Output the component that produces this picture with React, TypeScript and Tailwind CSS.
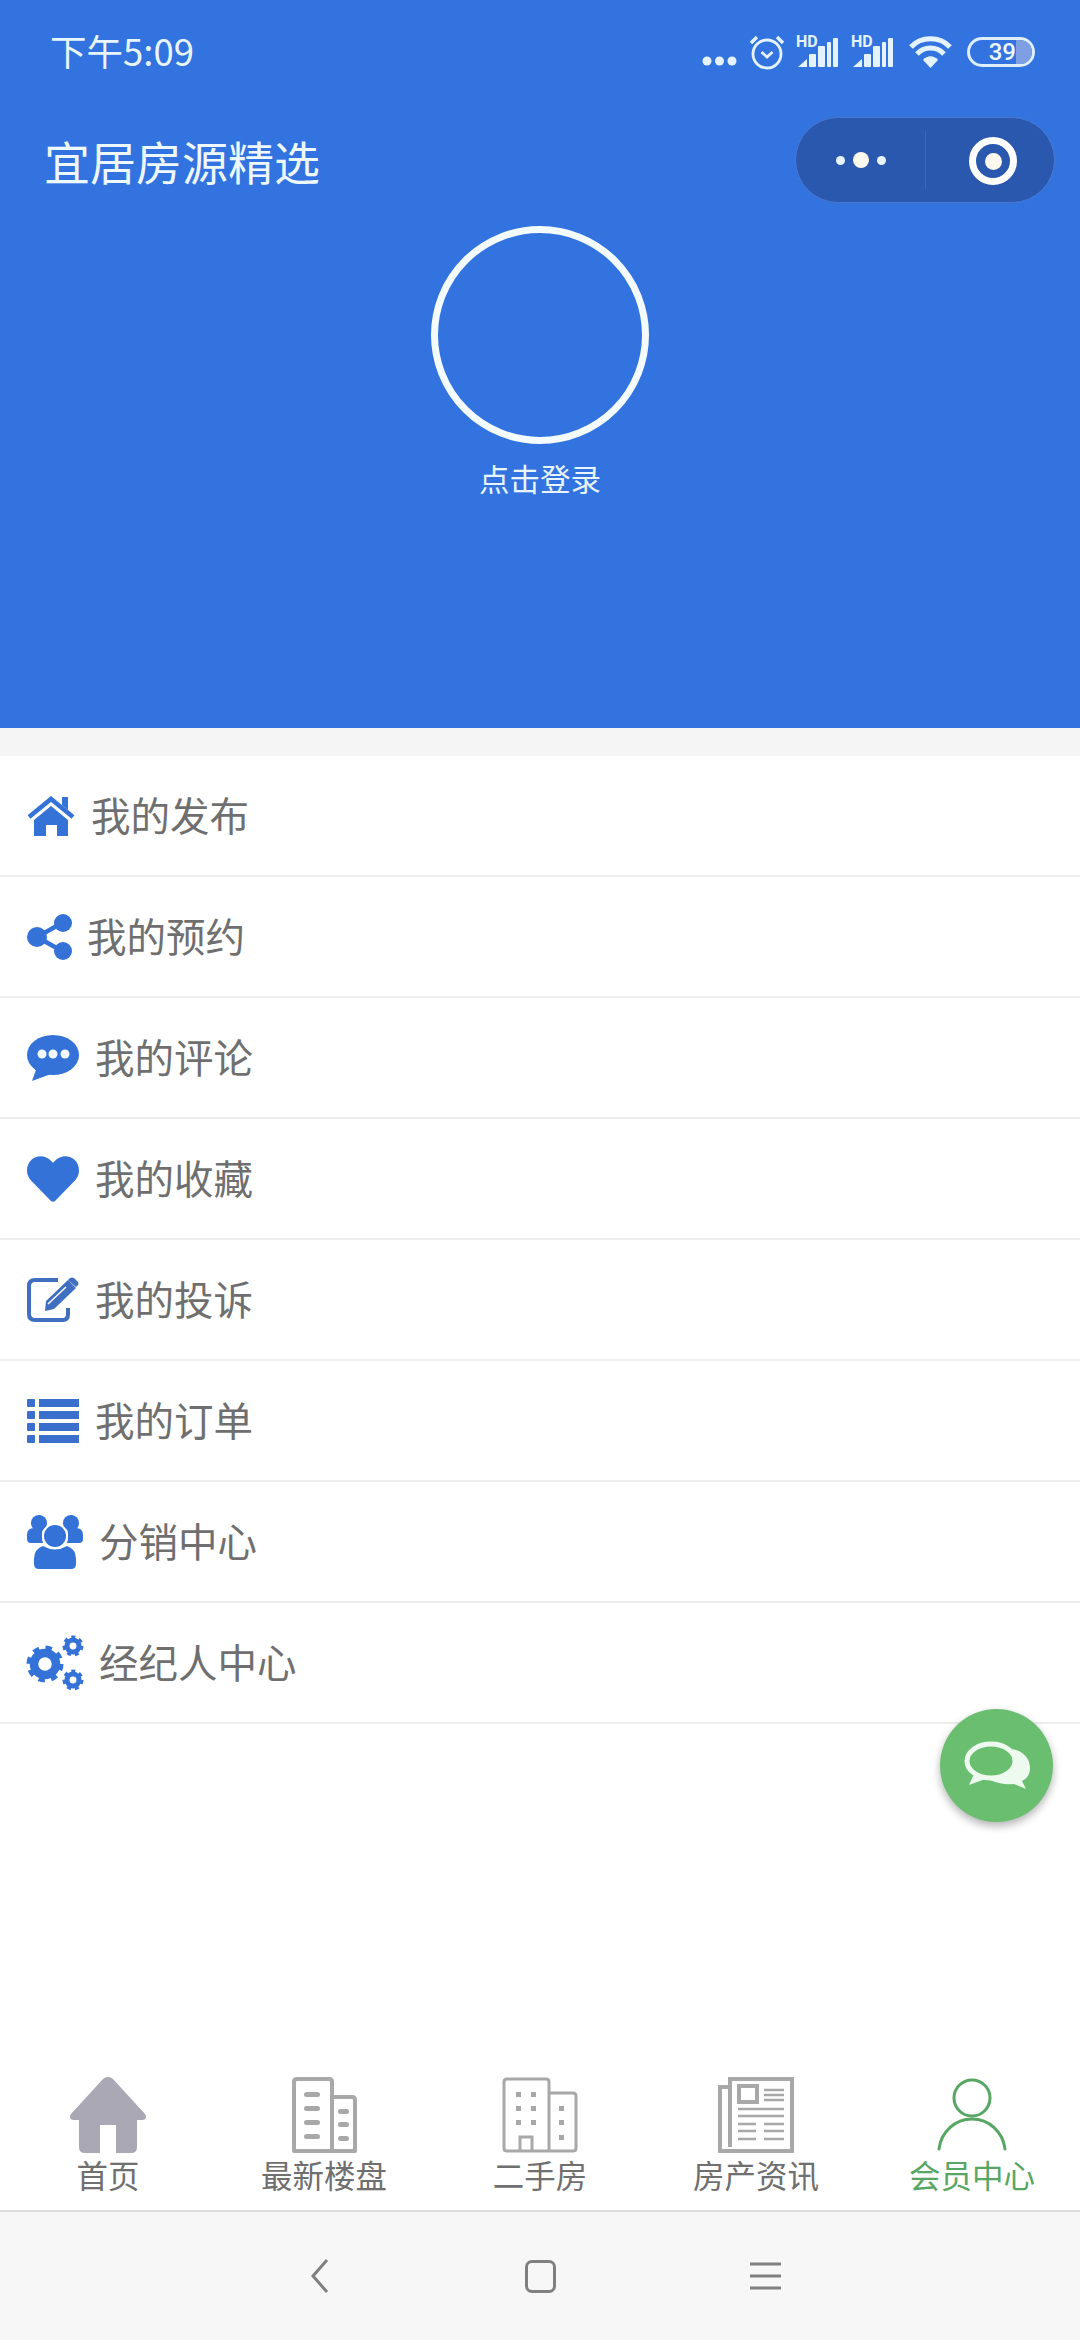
import type { ReactNode } from "react";
import { FaHeart } from "react-icons/fa";

const font = { fontFamily: '"Noto Sans CJK SC", "Noto Sans", sans-serif' };

const Signal = () => (
  <svg width="43" height="40" viewBox="0 -9 43 40" fill="#e4f3ff" className="-mt-[9px]">
    <text x="0" y="10" fontSize="16" fontWeight="700" fontFamily="Roboto, sans-serif">HD</text>
    <path d="M2 30 L11 22 V30 Z" />
    <rect x="13" y="17" width="7" height="13" rx="1" />
    <rect x="22" y="9" width="7" height="21" rx="1" />
    <rect x="31" y="5" width="4" height="25" rx="1" />
    <rect x="37" y="1" width="5" height="29" rx="1" />
  </svg>
);

const StatusBar = () => (
  <div className="h-[104px] flex items-center justify-between pl-[50px] pr-[45px]">
    <span className="text-[36.5px] leading-none text-[#e8f5ff] pb-[2px]">下午5:09</span>
    <div className="flex items-center">
      <svg width="35" height="12" viewBox="0 0 35 12" fill="#e4f3ff" className="mt-[18px]">
        <circle cx="5" cy="6" r="4.5" />
        <circle cx="17.5" cy="6" r="4.5" />
        <circle cx="30" cy="6" r="4.5" />
      </svg>
      <svg width="36" height="36" viewBox="0 0 36 36" fill="none" stroke="#e4f3ff" className="ml-[12px]">
        <circle cx="18" cy="20" r="14" strokeWidth="2.8" />
        <path d="M12.5 18 L18 23 L23.5 18" strokeWidth="2.8" />
        <path d="M2 9 L8 3 M34 9 L28 3" strokeWidth="3.4" />
      </svg>
      <div className="ml-[11px] flex"><Signal /></div>
      <div className="ml-[12px] flex"><Signal /></div>
      <svg width="43" height="34" viewBox="0 0 43 34" fill="none" stroke="#e4f3ff" strokeWidth="5" className="ml-[15px]">
        <path d="M2 12 C12 1 31 1 41 12" />
        <path d="M8 19 C15 11 28 11 35 19" />
        <path d="M21.5 33 L14 25 C18 20 25 20 29 25 Z" fill="#e4f3ff" stroke="none" />
      </svg>
      <div className="ml-[15px] w-[68px] h-[30px] rounded-full border-[3px] border-[#dceeff] flex items-center overflow-hidden">
        <div className="w-[46px] h-full flex items-center justify-end">
          <span className="text-[24px] leading-none font-medium text-[#eef8ff]" style={{ fontFamily: "Roboto, sans-serif" }}>39</span>
        </div>
        <div className="flex-1 h-full bg-[#7f9fe4]" />
      </div>
    </div>
  </div>
);

const Capsule = () => (
  <div className="w-[260px] h-[86px] rounded-full bg-[#2a58ae] border border-[#4a78cf] flex items-center">
    <div className="w-[129px] flex items-center justify-center gap-[8px]">
      <div className="w-[9px] h-[9px] rounded-full bg-[#e8f5ff]" />
      <div className="w-[16px] h-[16px] rounded-full bg-[#fff8ee]" />
      <div className="w-[9px] h-[9px] rounded-full bg-[#e8f5ff]" />
    </div>
    <div className="w-px h-[58px] bg-[#4068b8]" />
    <div className="flex-1 flex items-center justify-center pl-[6px] pt-[2px]">
      <div className="w-[48px] h-[48px] rounded-full border-[7px] border-white flex items-center justify-center">
        <div className="w-[17px] h-[17px] rounded-full bg-[#fff8ee]" />
      </div>
    </div>
  </div>
);

const HomeIcon = () => (
  <svg width="48" height="40" viewBox="0 0 48 40" fill="#3472d8" className="shrink-0">
    <path d="M2 21 L24 3 L46 21" fill="none" stroke="#3472d8" strokeWidth="4.5" />
    <path d="M35 1 H41 V14 L35 9 Z" />
    <path d="M7 24 L24 10 L41 24 V40 H30 V29 H19 V40 H7 Z" />
  </svg>
);

const ShareIcon = () => (
  <svg width="45" height="46" viewBox="0 0 45 46" fill="#3472d8" className="shrink-0">
    <path d="M10 23 L35 9 M10 23 L35 37" stroke="#3472d8" strokeWidth="4.5" />
    <circle cx="10" cy="23" r="10" />
    <circle cx="36" cy="9" r="9" />
    <circle cx="36" cy="37" r="9" />
  </svg>
);

const CommentIcon = () => (
  <svg width="52" height="46" viewBox="0 0 52 46" fill="#3472d8" className="shrink-0">
    <ellipse cx="26" cy="20" rx="26" ry="20" />
    <path d="M10 32 L5 46 L24 39 Z" />
    <g fill="#f2f8ff">
      <circle cx="15" cy="19" r="4.5" />
      <circle cx="26" cy="19" r="4.5" />
      <circle cx="38" cy="19" r="4.5" />
    </g>
  </svg>
);

const EditIcon = () => (
  <svg width="52" height="46" viewBox="0 0 52 46" className="shrink-0">
    <path d="M31 3 H8 Q2 3 2 9 V37 Q2 43 8 43 H36 Q41 43 41 37 V31" fill="none" stroke="#3f6fbe" strokeWidth="4" />
    <path d="M19 24 L41 3 L49 11 L27 32 L18 34 Z" fill="#3f6fbe" />
    <path d="M43 1 Q45 0 47 1 L51 5 Q52 7 51 8 L49 10 L41 3 Z" fill="#3f6fbe" />
    <path d="M21 27 L39 10" stroke="#fff" strokeWidth="1.5" />
  </svg>
);

const ListIcon = () => (
  <svg width="52" height="44" viewBox="0 0 52 44" fill="#3a70cc" className="shrink-0">
    {[0, 12, 24, 36].map((y) => (
      <g key={y}>
        <rect x="0" y={y} width="8" height="8" rx="1" />
        <rect x="12" y={y} width="40" height="8" />
      </g>
    ))}
  </svg>
);

const UsersIcon = () => (
  <svg width="56" height="54" viewBox="0 0 56 54" fill="#3472d8" className="shrink-0">
    <circle cx="12" cy="8" r="8" />
    <circle cx="44" cy="8" r="8" />
    <path d="M0 20 Q0 13 7 13 H16 Q14 22 16 28 H4 Q0 28 0 24 Z" />
    <path d="M56 20 Q56 13 49 13 H40 Q42 22 40 28 H52 Q56 28 56 24 Z" />
    <circle cx="28" cy="21" r="12" stroke="#fff" strokeWidth="2" />
    <path d="M7 44 Q7 34 16 31 Q28 38 40 31 Q49 34 49 44 V49 Q49 54 44 54 H12 Q7 54 7 49 Z" />
  </svg>
);

const Gear = ({ cx, cy, r, w, teeth }: { cx: number; cy: number; r: number; w: number; teeth: number }) => {
  const toothR = r + w;
  const dash = (2 * Math.PI * toothR) / (teeth * 2);
  return (
    <g fill="none" stroke="#3472d8">
      <circle cx={cx} cy={cy} r={r} strokeWidth={w * 1.7} />
      <circle cx={cx} cy={cy} r={toothR} strokeWidth={w} strokeDasharray={`${dash} ${dash}`} />
    </g>
  );
};

const CogsIcon = () => (
  <svg width="58" height="56" viewBox="0 0 58 56" className="shrink-0">
    <Gear cx={19} cy={29} r={11} w={5} teeth={8} />
    <Gear cx={47} cy={11} r={6} w={3} teeth={7} />
    <Gear cx={47} cy={45} r={6} w={3} teeth={7} />
  </svg>
);

const rows: { label: string; icon: ReactNode; width: string }[] = [
  { label: "我的发布", icon: <HomeIcon />, width: "w-[48px]" },
  { label: "我的预约", icon: <ShareIcon />, width: "w-[44px]" },
  { label: "我的评论", icon: <CommentIcon />, width: "w-[52px]" },
  { label: "我的收藏", icon: <FaHeart size={52} />, width: "w-[52px]" },
  { label: "我的投诉", icon: <EditIcon />, width: "w-[52px]" },
  { label: "我的订单", icon: <ListIcon />, width: "w-[52px]" },
  { label: "分销中心", icon: <UsersIcon />, width: "w-[56px]" },
  { label: "经纪人中心", icon: <CogsIcon />, width: "w-[56px]" },
];

const Row = ({ label, icon, width }: { label: string; icon: ReactNode; width: string }) => (
  <div className="h-[121px] border-b-2 border-[#eeeeee] flex items-center pl-[27px] gap-[16px]">
    <div className={`${width} flex items-center justify-center text-[#3472d8]`}>{icon}</div>
    <span className="text-[39.5px] leading-none text-[#6f6f6f] pb-[3px]">{label}</span>
  </div>
);

const gray = "#a8a8a8";

const HomeTab = () => (
  <svg width="76" height="76" viewBox="0 0 76 76" fill="#a9a8b4">
    <path d="M38 0 Q41 0 43 2 L75 37 Q78 42 72 43 H67 V70 Q67 76 61 76 H46 V48 H30 V76 H15 Q9 76 9 70 V43 H4 Q-2 42 1 37 L33 2 Q35 0 38 0 Z" />
  </svg>
);

const BuildingsTab = () => (
  <svg width="66" height="76" viewBox="0 0 66 76">
    <path d="M3 74 V5 Q3 2 6 2 H38 Q41 2 41 5 V74 Z M41 20 H61 Q64 20 64 23 V74 H3" fill="none" stroke={gray} strokeWidth="4" strokeLinejoin="round" />
    <g fill={gray}>
      {[15, 29, 43, 57].map((y) => <rect key={y} x="13" y={y} width="16" height="5" rx="2.5" />)}
      {[32, 45, 59].map((y) => <rect key={y} x="47" y={y} width="11" height="5" rx="2.5" />)}
    </g>
  </svg>
);

const TowerTab = () => (
  <svg width="76" height="76" viewBox="0 0 76 76">
    <path d="M2 71 V5 Q2 2 5 2 H44 Q47 2 47 5 V74 H5 Q2 74 2 71 Z M47 16 H71 Q74 16 74 19 V71 Q74 74 71 74 H47" fill="none" stroke={gray} strokeWidth="3" />
    <path d="M18 74 V60 H30 V74" fill="none" stroke={gray} strokeWidth="3" />
    <g fill={gray}>
      {[15, 29, 43].map((y) => (
        <g key={y}>
          <rect x="14" y={y} width="5" height="5" />
          <rect x="29" y={y} width="5" height="5" />
        </g>
      ))}
      {[29, 43, 58].map((y) => <rect key={y} x="57" y={y} width="5" height="5" />)}
    </g>
  </svg>
);

const NewsTab = () => (
  <svg width="76" height="76" viewBox="0 0 76 76">
    <path d="M10 10 H2 V74 H74 V2 H12 V70" fill="none" stroke={gray} strokeWidth="4" />
    <rect x="21" y="9" width="18" height="16" fill="none" stroke={gray} strokeWidth="4" />
    <g stroke={gray} strokeWidth="2.5">
      <path d="M46 13 H66 M46 18 H66 M46 23 H66" />
      <path d="M20 32 H66 M20 39 H66" />
      <path d="M20 47 H38 M46 47 H66 M20 54 H38 M46 54 H66 M20 62 H38 M46 62 H66" />
    </g>
  </svg>
);

const UserTab = () => (
  <svg width="70" height="76" viewBox="0 0 70 76" fill="none" stroke="#58a664" strokeWidth="3">
    <circle cx="35" cy="21" r="18" />
    <path d="M2 72 C4 55 18 42 35 42 C52 42 66 55 68 72" strokeLinecap="round" />
  </svg>
);

const tabs: { label: string; icon: ReactNode; active?: boolean }[] = [
  { label: "首页", icon: <HomeTab /> },
  { label: "最新楼盘", icon: <BuildingsTab /> },
  { label: "二手房", icon: <TowerTab /> },
  { label: "房产资讯", icon: <NewsTab /> },
  { label: "会员中心", icon: <UserTab />, active: true },
];

const Fab = () => (
  <div className="absolute left-[940px] top-[1709px] w-[113px] h-[113px] rounded-full bg-[#69bf6f] shadow-[0_4px_8px_rgba(0,0,0,0.3)] flex items-center justify-center">
    <svg width="66" height="50" viewBox="0 0 66 50">
      <path d="M48 8 Q66 12 66 28 Q66 36 58 40 L62 48 L50 43 Q36 44 26 39 Q44 38 50 26 Q53 16 48 8 Z" fill="#eefaf0" />
      <ellipse cx="27" cy="20" rx="24" ry="17" fill="#69bf6f" stroke="#eefaf0" strokeWidth="5" />
      <path d="M11 31 L5 44 L24 37 Z" fill="#eefaf0" />
    </svg>
  </div>
);

export default function App() {
  return (
    <div className="relative w-[1080px] h-[2340px] bg-white flex flex-col" style={font}>
      {/* HEADER */}
      <div className="h-[728px] bg-[#3273e0] flex flex-col">
        <StatusBar />
        <div className="mt-[13px] flex items-center justify-between pl-[44px] pr-[25px]">
          <span className="text-[46px] leading-none text-[#eef8ff]">宜居房源精选</span>
          <Capsule />
        </div>
        <div className="mt-[23px] flex flex-col items-center">
          <div className="w-[218px] h-[218px] rounded-full border-[7px] border-[#f4fbff]" />
          <span className="mt-[19px] text-[30.5px] leading-none text-[#e8f5ff]">点击登录</span>
        </div>
      </div>
      <div className="h-[28px] bg-[#f5f5f5]" />

      {/* MENU */}
      <div className="flex flex-col">
        {rows.map((r) => (
          <Row key={r.label} {...r} />
        ))}
      </div>

      <div className="flex-1" />

      {/* TABS */}
      <div className="grid grid-cols-5 h-[136px] pt-[3px]">
        {tabs.map((t) => (
          <div key={t.label} className="flex flex-col items-center">
            <div className="h-[76px] flex items-center justify-center">{t.icon}</div>
            <span className={`mt-[1px] text-[31.5px] leading-[40px] ${t.active ? "text-[#58a664]" : "text-[#6f6f6f]"}`}>{t.label}</span>
          </div>
        ))}
      </div>

      {/* ANDROID NAV */}
      <div className="h-[130px] bg-[#f7f7f7] border-t-2 border-[#dddddd] flex items-center pl-[208px]">
        <div className="w-[222px] flex justify-center">
          <svg width="20" height="36" viewBox="0 0 20 36" fill="none" stroke="#808080" strokeWidth="3">
            <path d="M18 2 L4 18 L18 34" />
          </svg>
        </div>
        <div className="w-[220px] flex justify-center">
          <div className="w-[31px] h-[33px] rounded-[7px] border-[3px] border-[#808080]" />
        </div>
        <div className="w-[230px] flex justify-center">
          <svg width="31" height="28" viewBox="0 0 31 28" stroke="#808080" strokeWidth="3">
            <path d="M0 2 H31 M0 14 H31 M0 26 H31" />
          </svg>
        </div>
      </div>

      <Fab />
    </div>
  );
}
